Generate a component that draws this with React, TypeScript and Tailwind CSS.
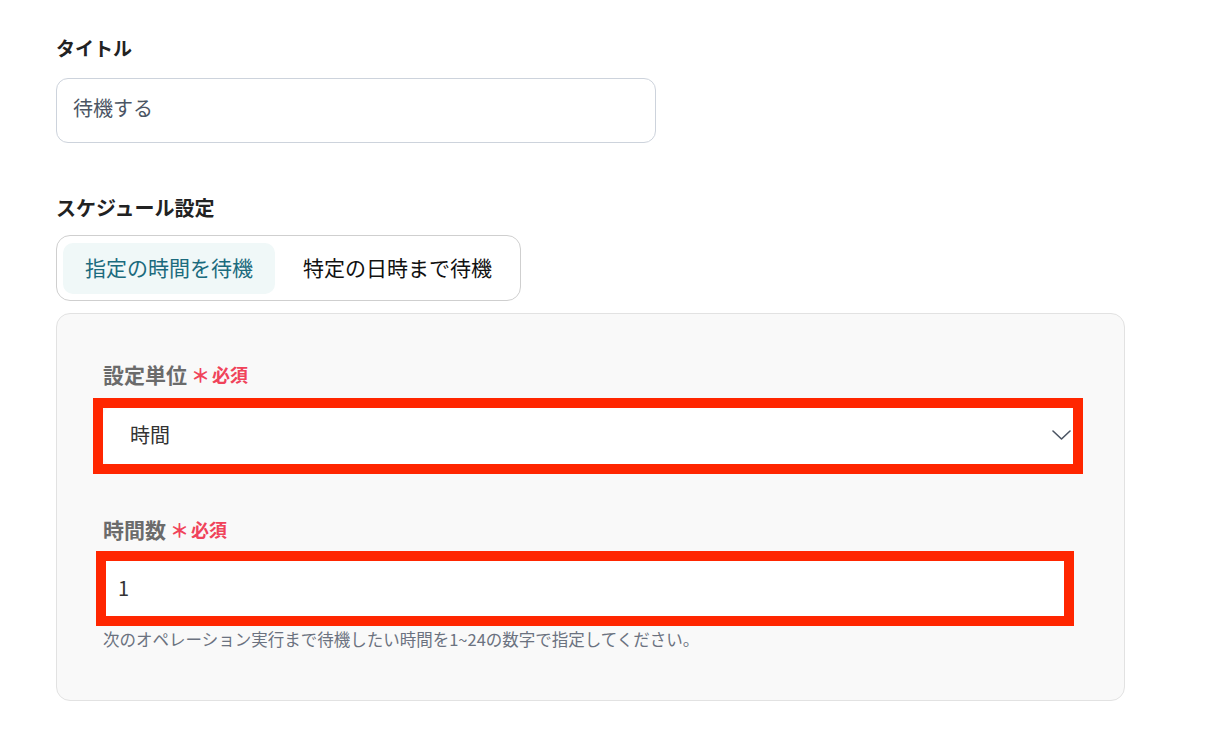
import React from 'react'

const font = { fontFamily: '"Noto Sans CJK JP", "Noto Sans", sans-serif' }

function Required() {
  return (
    <span className="ml-[4px] inline-flex items-center text-[18px] font-bold text-[#f0435a]">
      <span className="mr-[2px] text-[19px] leading-none">＊</span>必須
    </span>
  )
}

function Chevron() {
  return (
    <svg width="19" height="10" viewBox="0 0 19 10" fill="none">
      <path d="M1 1l8.5 8 8.5-8" stroke="#4b5563" strokeWidth="1.6" strokeLinecap="round" strokeLinejoin="round" />
    </svg>
  )
}

export default function App() {
  return (
    <div className="min-h-screen bg-white pl-[56px] pt-[34px]" style={font}>
      <div className="text-[19px] font-bold leading-[28px] text-[#222]">タイトル</div>
      <div className="mt-[16px] flex h-[65px] w-[600px] items-center rounded-[12px] border border-[#cdd3dc] px-[16px] pb-[5px] text-[20px] text-[#4b5563]">
        待機する
      </div>

      <div className="mt-[51px] text-[20px] font-bold leading-[28px] text-[#222]">スケジュール設定</div>
      <div className="mt-[13px] inline-flex h-[66px] items-center gap-[6px] rounded-[14px] border border-[#cfcfcf] px-[6px]">
        <div className="flex h-[51px] items-center rounded-[10px] bg-[#f0f8f8] px-[22px] text-[21px] text-[#1b6b7e]">
          指定の時間を待機
        </div>
        <div className="flex h-[51px] items-center px-[22px] text-[21px] text-[#111]">特定の日時まで待機</div>
      </div>

      <div className="mt-[12px] h-[388px] w-[1069px] rounded-[14px] border border-[#e2e2e2] bg-[#f9f9f9] px-[46px] pt-[47px]">
        <div className="flex items-center text-[21px] font-bold leading-[26px] text-[#6b6b6b]">
          設定単位
          <Required />
        </div>
        <div className="ml-[-10px] mt-[11px] w-[990px] border-[10px] border-[#ff2600]">
          <div className="flex h-[56px] items-center justify-between rounded-l-[8px] bg-white pb-[2px] pl-[27px] pr-[2px] text-[20px] text-[#333]">
            <span>時間</span>
            <Chevron />
          </div>
        </div>

        <div className="mt-[42px] flex items-center text-[21px] font-bold leading-[26px] text-[#6b6b6b]">
          時間数
          <Required />
        </div>
        <div className="ml-[-7px] mt-[9px] w-[978px] border-[10px] border-[#ff2600]">
          <div className="flex h-[55px] items-center bg-white pb-[2px] pl-[12px] text-[20px] text-[#333]">1</div>
        </div>
        <div className="mt-[3px] text-[16.5px] leading-[20px] text-[#6b7280]">
          次のオペレーション実行まで待機したい時間を1~24の数字で指定してください。
        </div>
      </div>
    </div>
  )
}
